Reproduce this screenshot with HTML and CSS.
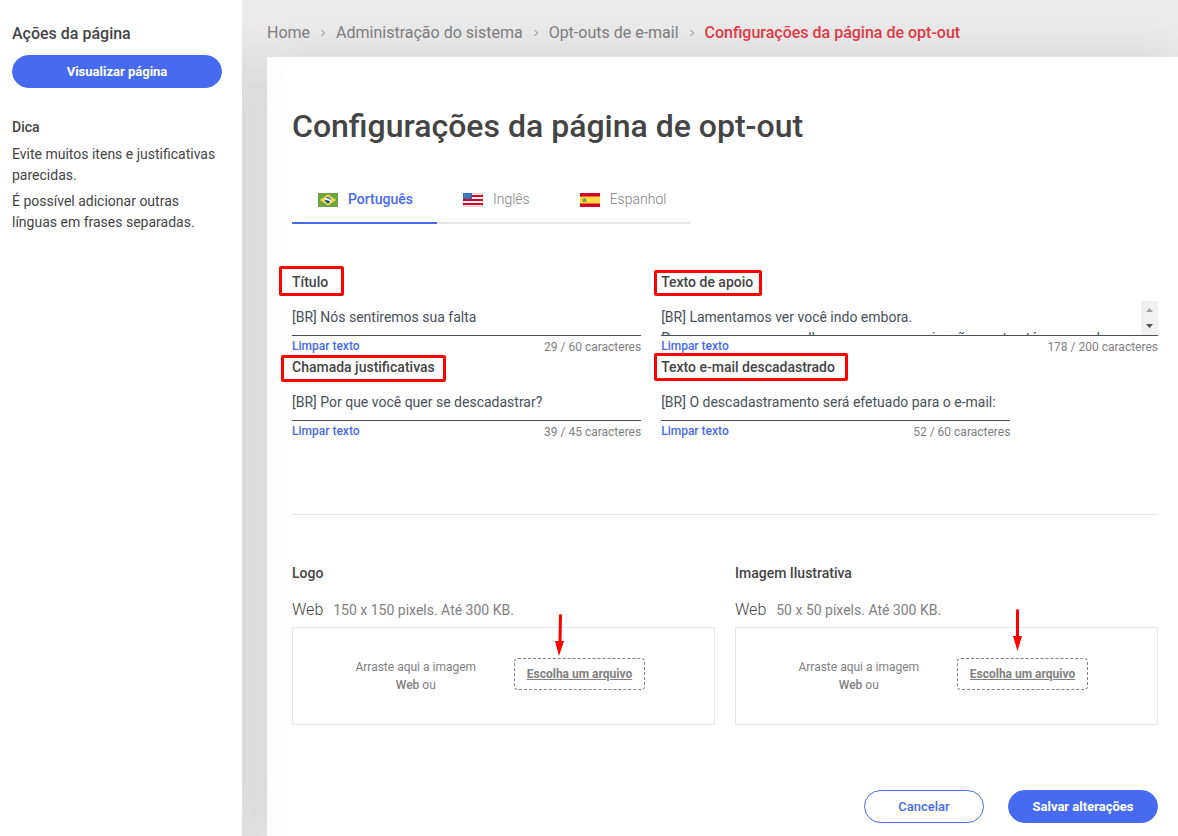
FILE: index.html
```html
<!DOCTYPE html>
<html lang="pt-BR">
<head>
<meta charset="utf-8">
<meta name="viewport" content="width=device-width, initial-scale=1">
<title>Configurações da página de opt-out</title>
<link rel="stylesheet" href="styles.css">
</head>
<body>
<div class="layout">
  <aside class="sidebar">
    <h2 class="sidebar-title">Ações da página</h2>
    <button class="btn btn-primary btn-block" type="button">Visualizar página</button>
    <h3 class="tip-title">Dica</h3>
    <p class="tip">Evite muitos itens e justificativas parecidas.</p>
    <p class="tip">É possível adicionar outras línguas em frases separadas.</p>
  </aside>

  <div class="content">
    <nav class="breadcrumb" aria-label="Navegação">
      <a href="#">Home</a>
      <svg class="chevron" viewBox="0 0 6 8" aria-hidden="true"><path d="M1.5 1 4.5 4l-3 3"/></svg>
      <a href="#">Administração do sistema</a>
      <svg class="chevron" viewBox="0 0 6 8" aria-hidden="true"><path d="M1.5 1 4.5 4l-3 3"/></svg>
      <a href="#">Opt-outs de e-mail</a>
      <svg class="chevron" viewBox="0 0 6 8" aria-hidden="true"><path d="M1.5 1 4.5 4l-3 3"/></svg>
      <a class="current" href="#" aria-current="page">Configurações da página de opt-out</a>
    </nav>

    <main class="card">
      <h1 class="title">Configurações da página de opt-out</h1>

      <div class="tabs" role="tablist">
        <button class="tab tab-active" type="button" role="tab" aria-selected="true">
          <svg class="flag" viewBox="0 0 20 14" aria-hidden="true"><rect width="20" height="14" fill="#6da544"/><path d="M10 1.6 18.2 7 10 12.4 1.8 7z" fill="#ffda44"/><circle cx="10" cy="7" r="3.1" fill="#f4f4f4"/><path d="M7.6 5.1A3.1 3.1 0 0 1 13.1 7.2 6 6 0 0 0 7.6 5.1zM6.9 7.1a6 6 0 0 1 5.4 2A3.1 3.1 0 0 1 6.9 7.1z" fill="#0052b4"/></svg>
          <span>Português</span>
        </button>
        <button class="tab" type="button" role="tab" aria-selected="false">
          <svg class="flag" viewBox="0 0 20 14" aria-hidden="true"><rect width="20" height="14" fill="#f4f4f4"/><path d="M0 2h20v2H0zM0 6h20v2H0zM0 10h20v2H0z" fill="#d80027"/><rect width="9" height="6" fill="#2e6bb8"/><path d="M1 1.5h1v1H1zM3.5 1.5h1v1h-1zM6 1.5h1v1H6zM2 3.5h1v1H2zM5 3.5h1v1H5z" fill="#9bb2de"/><path d="M.5 6v7.5h19V.5H9" fill="none" stroke="#d80027" stroke-opacity=".2"/></svg>
          <span>Inglês</span>
        </button>
        <button class="tab" type="button" role="tab" aria-selected="false">
          <svg class="flag" viewBox="0 0 20 14" aria-hidden="true"><rect width="20" height="14" fill="#d80027"/><rect y="3.5" width="20" height="7" fill="#ffda44"/><path d="M2 6h1v3H2zM6 6h1v3H6z" fill="#c9b53c"/><path d="M3 6l1-1h1l1 1v3H3z" fill="#7ba544"/></svg>
          <span>Espanhol</span>
        </button>
      </div>

      <form>
        <div class="fields">
          <div class="field">
            <label class="label" for="titulo"><span class="mark mark-titulo">Título</span></label>
            <input class="control" id="titulo" type="text" value="[BR] Nós sentiremos sua falta">
            <div class="helper"><button class="clear" type="button">Limpar texto</button><span class="count">29 / 60 caracteres</span></div>
          </div>
          <div class="field field-wide">
            <label class="label" for="apoio"><span class="mark mark-apoio">Texto de apoio</span></label>
            <div class="area">
              <textarea class="control" id="apoio" rows="1">[BR] Lamentamos ver você indo embora.
Para que possamos melhorar nossa comunicação, conta até mesmo de onde</textarea>
              <svg class="scroller" viewBox="0 0 17 34" aria-hidden="true"><rect width="17" height="34" fill="#f1f1f1"/><path d="M5 11 8.500 7 12 11z" fill="#a3a3a3"/><path d="M5 23h7l-3.500 4z" fill="#505050"/></svg>
            </div>
            <div class="helper"><button class="clear" type="button">Limpar texto</button><span class="count">178 / 200 caracteres</span></div>
          </div>
          <div class="field">
            <label class="label" for="chamada"><span class="mark mark-chamada">Chamada justificativas</span></label>
            <input class="control" id="chamada" type="text" value="[BR] Por que você quer se descadastrar?">
            <div class="helper"><button class="clear" type="button">Limpar texto</button><span class="count">39 / 45 caracteres</span></div>
          </div>
          <div class="field">
            <label class="label" for="email"><span class="mark mark-email">Texto e-mail descadastrado</span></label>
            <input class="control" id="email" type="text" value="[BR] O descadastramento será efetuado para o e-mail:">
            <div class="helper"><button class="clear" type="button">Limpar texto</button><span class="count">52 / 60 caracteres</span></div>
          </div>
        </div>

        <hr class="rule">

        <div class="uploads">
          <section>
            <h2 class="label">Logo</h2>
            <p class="spec"><span class="spec-name">Web</span>150 x 150 pixels. Até 300 KB.</p>
            <div class="drop">
              <p class="drop-text">Arraste aqui a imagem <b>Web</b> ou</p>
              <div class="picker">
                <button class="choose" type="button">Escolha um arquivo</button>
                <svg class="arrow arrow-logo" viewBox="0 0 10 42" aria-hidden="true"><path d="M5.500 1.500 5 28" stroke="#f00" stroke-width="3" stroke-linecap="round"/><path d="M0 27h9L4 42z" fill="#f00"/></svg>
              </div>
            </div>
          </section>
          <section>
            <h2 class="label">Imagem Ilustrativa</h2>
            <p class="spec"><span class="spec-name">Web</span>50 x 50 pixels. Até 300 KB.</p>
            <div class="drop">
              <p class="drop-text">Arraste aqui a imagem <b>Web</b> ou</p>
              <div class="picker">
                <button class="choose" type="button">Escolha um arquivo</button>
                <svg class="arrow arrow-image" viewBox="0 0 10 42" aria-hidden="true"><path d="M4.500 1.500v27" stroke="#f00" stroke-width="3" stroke-linecap="round"/><path d="M0 27h9L4.500 42z" fill="#f00"/></svg>
              </div>
            </div>
          </section>
        </div>

        <div class="actions">
          <button class="btn btn-outline" type="button">Cancelar</button>
          <button class="btn btn-primary btn-save" type="submit">Salvar alterações</button>
        </div>
      </form>
    </main>
  </div>
</div>
</body>
</html>
```
FILE: styles.css
```css
* {
  box-sizing: border-box;
}

body {
  margin: 0;
  background: #ebebeb;
  color: #444;
  font-family: Roboto, "Liberation Sans", sans-serif;
  font-size: 14px;
  line-height: 20px;
}

h1, h2, h3, p {
  margin: 0;
}

button, input, textarea {
  font-family: inherit;
}

button {
  cursor: pointer;
}

.layout {
  display: flex;
  min-height: 100vh;
  overflow: hidden;
}

/* Sidebar */
.sidebar {
  position: relative;
  z-index: 1;
  flex: 0 0 242px;
  padding: 24px 20px 0 12px;
  background: #fff;
  box-shadow: 0 50px 50px rgba(0, 0, 0, 0.1);
}

.sidebar-title {
  font-size: 16px;
  font-weight: 500;
}

.btn {
  height: 33px;
  padding: 0 20px;
  border: 1px solid #466bf0;
  border-radius: 17px;
  font-size: 13px;
  font-weight: 500;
}

.btn-primary {
  background: #466bf0;
  color: #fff;
  font-weight: 700;
}

.btn-outline {
  min-width: 120px;
  background: #fff;
  color: #466bf0;
}

.btn-save {
  min-width: 150px;
}

.btn-block {
  display: block;
  width: 100%;
  margin-top: 11px;
}

.tip-title {
  margin: 29px 0 7px;
  font-size: 14px;
  font-weight: 500;
}

.tip {
  margin-bottom: 5px;
  line-height: 21px;
}

/* Content */
.content {
  flex: 1;
  display: flex;
  flex-direction: column;
  min-width: 0;
  padding-left: 25px;
}

.breadcrumb {
  display: flex;
  align-items: center;
  padding: 23px 0 14px;
  font-size: 16px;
}

.breadcrumb a {
  color: #808080;
  text-decoration: none;
}

.breadcrumb .current {
  color: #e53947;
  font-weight: 500;
}

.chevron {
  width: 6px;
  height: 8px;
  margin: 0 10px;
  fill: none;
  stroke: #808080;
}

.card {
  flex: 1;
  padding: 49px 20px 13px 25px;
  background: #fff;
  box-shadow: 0 0 50px rgba(0, 0, 0, 0.1);
}

.title {
  font-size: 32px;
  font-weight: 500;
  line-height: 40px;
}

/* Language tabs */
.tabs {
  display: inline-flex;
  margin-top: 29px;
}

.tab {
  display: flex;
  align-items: center;
  gap: 10px;
  height: 49px;
  padding: 0 24px 0 26px;
  border: 0;
  border-bottom: 2px solid #e6e6e6;
  background: none;
  color: #808080;
  font-size: 14px;
  font-weight: 300;
}

.tab-active {
  border-color: #466bf0;
  color: #466bf0;
  font-weight: 500;
}

.flag {
  width: 20px;
  height: 14px;
  margin-top: 2px;
}

/* Text fields */
.fields {
  display: grid;
  grid-template-columns: repeat(12, 1fr);
  column-gap: 20px;
  margin-top: 48px;
}

.field {
  grid-column: span 5;
  min-width: 0;
}

.field-wide {
  grid-column: span 7;
}

.label {
  display: block;
  font-size: 14px;
  font-weight: 500;
  line-height: 20px;
}

.control {
  display: block;
  width: 100%;
  height: 35px;
  margin-top: 9px;
  padding: 0 0 2px;
  border: 0;
  border-bottom: 1px solid #495057;
  border-radius: 0;
  background: none;
  color: #495057;
  font-size: 14px;
  line-height: 21px;
}

.area {
  display: flex;
  margin-top: 9px;
  border-bottom: 1px solid #495057;
}

.area .control {
  flex: 1;
  height: 34px;
  margin: 0;
  padding: 6px 0 0;
  border: 0;
  resize: none;
  overflow: hidden;
}

.scroller {
  width: 17px;
  height: 34px;
}

.helper {
  display: flex;
  justify-content: space-between;
  height: 21px;
  font-size: 12px;
}

.clear {
  padding: 0 0 2px;
  border: 0;
  background: none;
  color: #466bf0;
  font-size: 12px;
  font-weight: 500;
}

.count {
  padding-top: 1px;
  color: #808080;
}

/* Red highlight frames over the labels */
.mark {
  position: relative;
}

.mark::before {
  content: "";
  position: absolute;
  border: 3px solid #f00;
  border-radius: 2px;
}

.mark-titulo::before {
  inset: -8px -16px -6px -13px;
}

.mark-apoio::before {
  inset: -4px -9px -6px -7px;
}

.mark-chamada::before {
  inset: -4px -11px -7px -11px;
}

.mark-email::before {
  inset: -6px -13px -6px -7px;
}

.rule {
  margin: 72px 0 48px;
  border: 0;
  border-top: 1px solid #e6e6e6;
}

/* Uploads */
.uploads {
  display: grid;
  grid-template-columns: 1fr 1fr;
  gap: 20px;
}

.spec {
  display: flex;
  align-items: baseline;
  gap: 10px;
  margin: 17px 0 7px;
  color: #808080;
}

.spec-name {
  color: #444;
  font-size: 16px;
  font-weight: 300;
}

.drop {
  display: flex;
  align-items: flex-start;
  justify-content: center;
  gap: 34px;
  min-height: 98px;
  padding: 30px 10px 30px 0;
  border: 1px solid #e6e6e6;
  color: #808080;
}

.drop-text {
  width: 128px;
  font-size: 12px;
  line-height: 18px;
  text-align: center;
}

.drop-text b {
  font-weight: 500;
}

.picker {
  position: relative;
}

.choose {
  display: block;
  height: 32px;
  padding: 0 12px;
  border: 1px dashed #808080;
  border-radius: 4px;
  background: none;
  color: #808080;
  font-size: 12px;
  font-weight: 700;
  text-decoration: underline;
}

.arrow {
  position: absolute;
  width: 10px;
  height: 42px;
  fill: none;
}

.arrow-logo {
  left: 41px;
  top: -44px;
}

.arrow-image {
  left: 56px;
  top: -49px;
}

.actions {
  display: flex;
  justify-content: flex-end;
  gap: 24px;
  margin-top: 65px;
}
```
